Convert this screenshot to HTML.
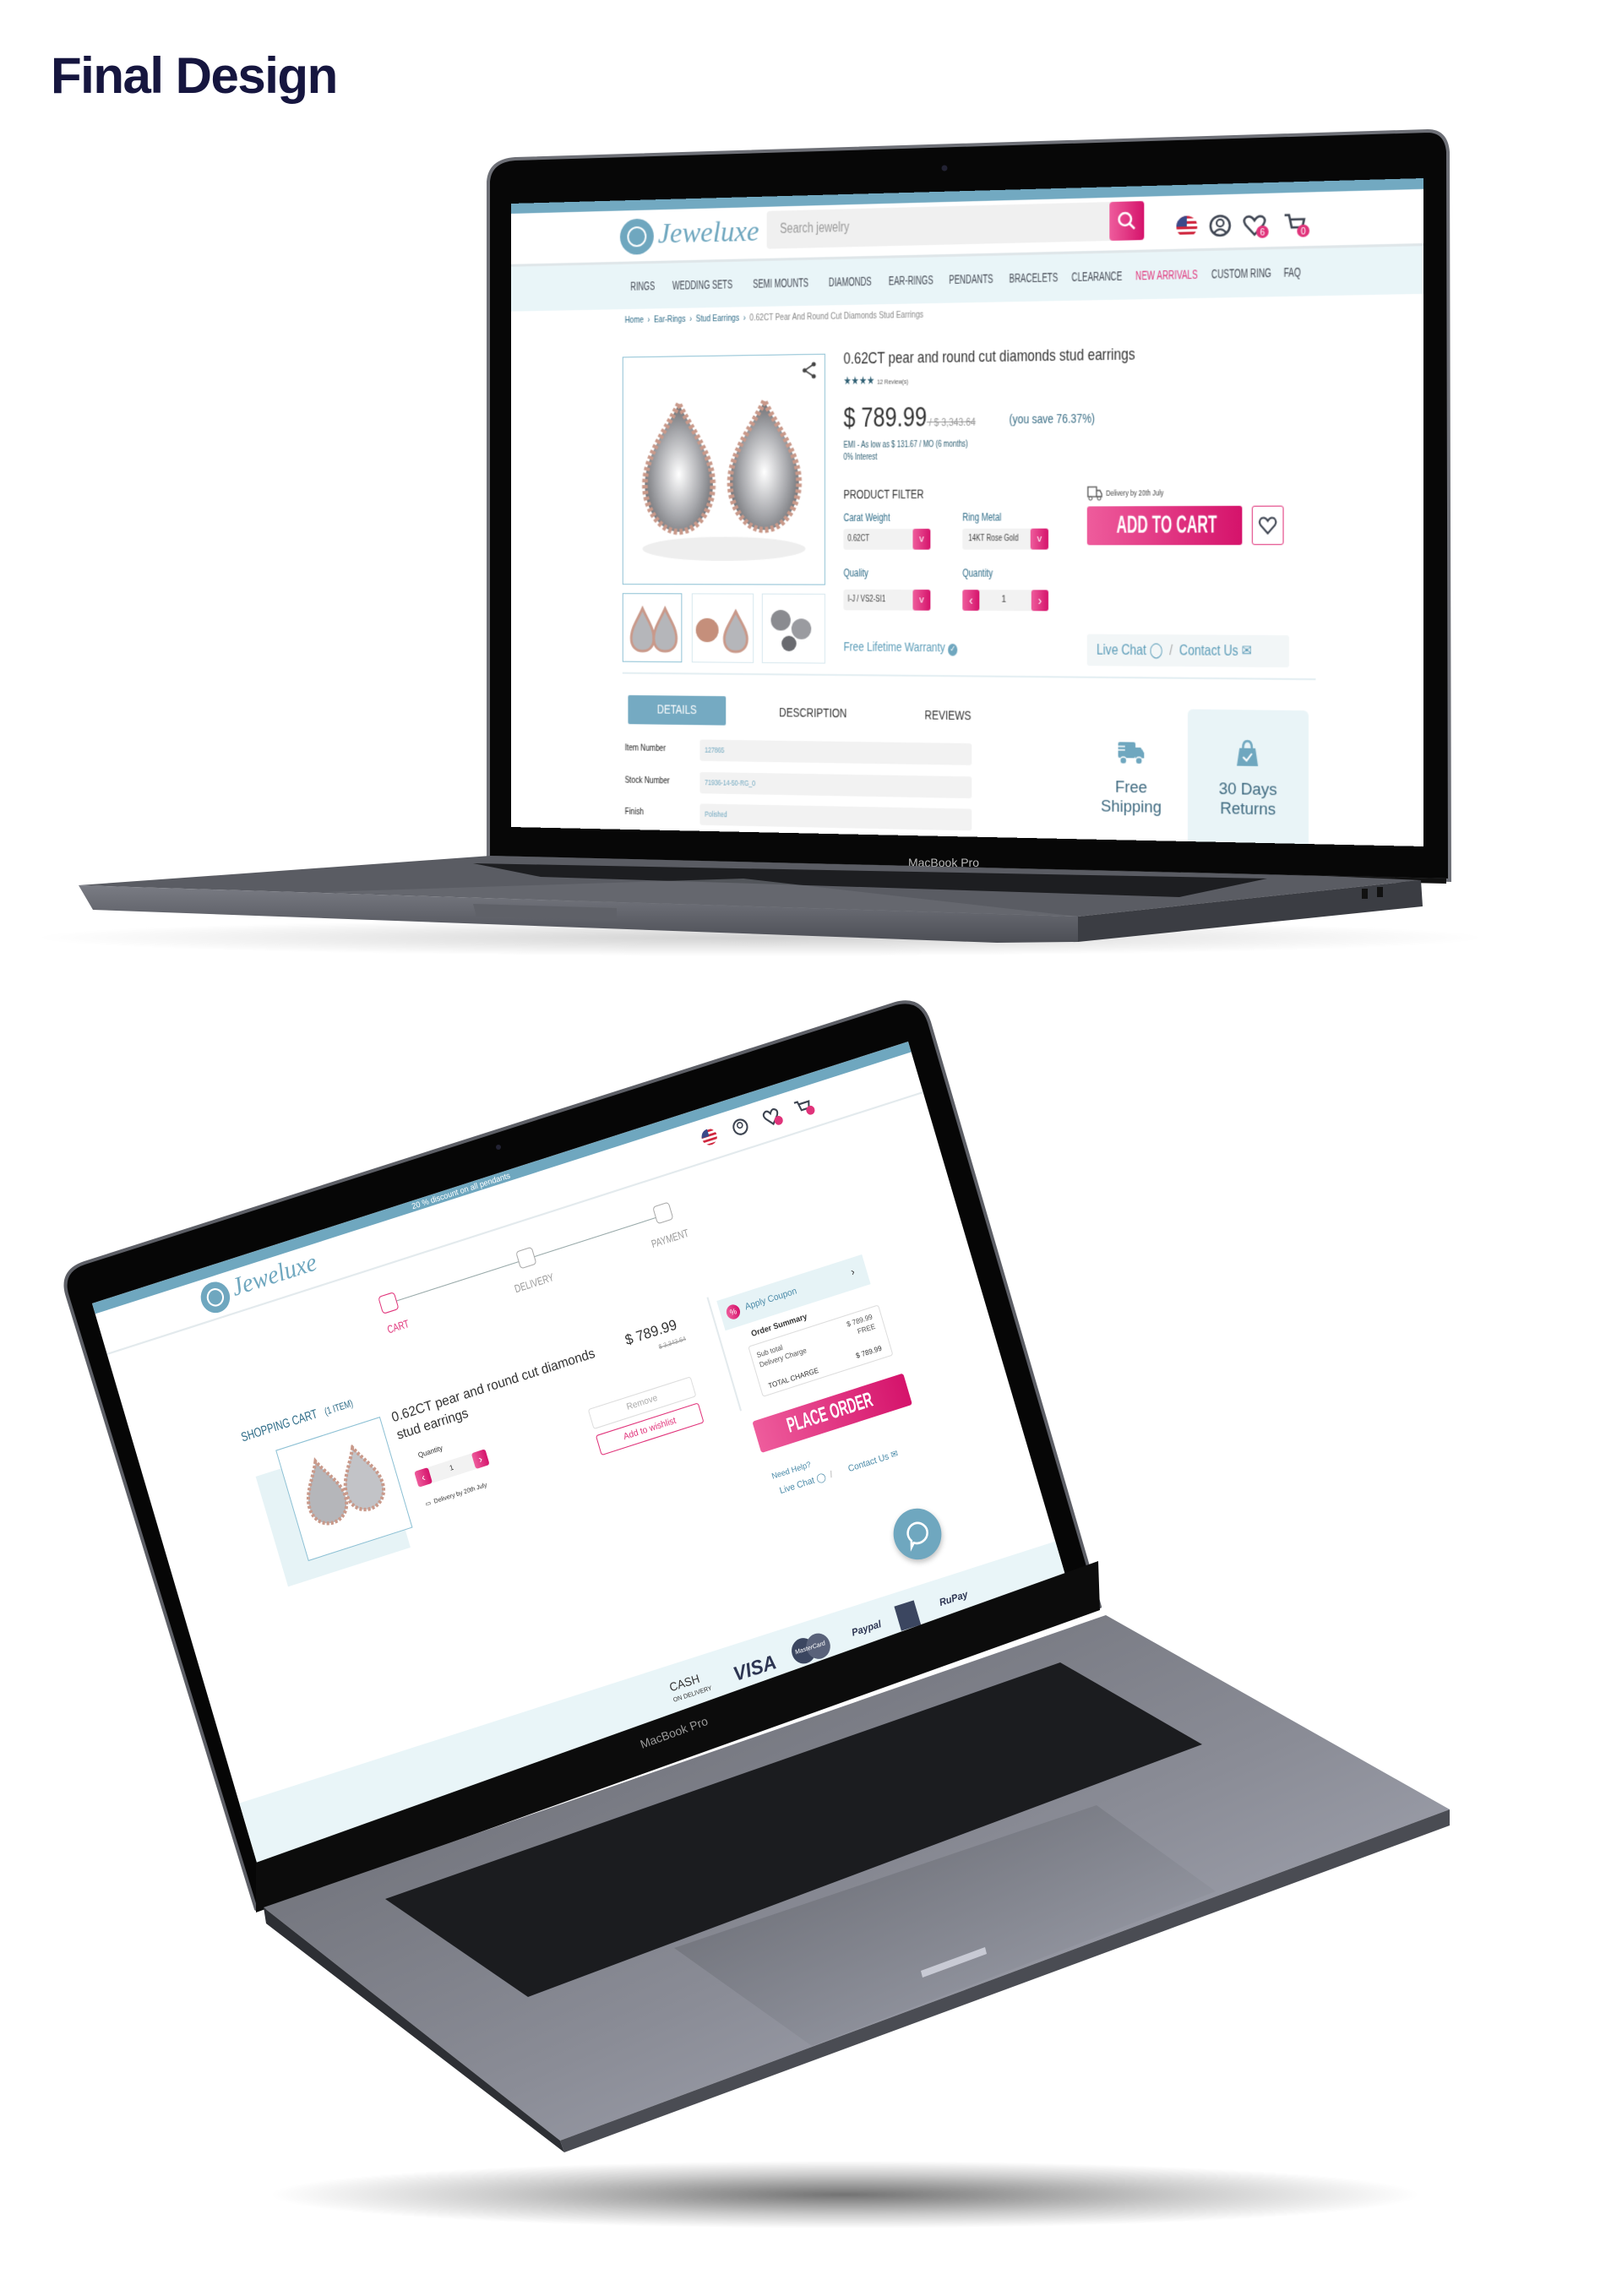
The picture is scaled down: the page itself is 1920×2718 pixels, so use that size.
<!DOCTYPE html>
<html><head><meta charset="utf-8">
<style>
*{margin:0;padding:0;box-sizing:border-box}
html,body{width:1920px;height:2718px;background:#fff;overflow:hidden;position:relative;font-family:"Liberation Sans",sans-serif}
.abs{position:absolute}
.n{position:absolute;white-space:nowrap;transform:scaleX(.8);transform-origin:0 50%}
.nv{position:absolute;white-space:nowrap;transform:scaleX(.64);transform-origin:0 50%}
.scr{position:absolute;left:0;top:0;transform-origin:0 0;background:#fff;overflow:hidden}
.pink{background:linear-gradient(90deg,#ee5c9c,#d5136b)}
</style></head><body>

<div class="abs" style="left:60px;top:60px;font-size:60px;line-height:60px;font-weight:bold;color:#16163f;letter-spacing:-1.5px">Final Design</div>

<!-- ============ LAPTOP 1 ============ -->
<svg class="abs" style="left:0;top:0" width="1920" height="1200">
  <defs>
    <radialGradient id="sh1" cx="50%" cy="50%" r="50%"><stop offset="0" stop-color="#000" stop-opacity=".18"/><stop offset="1" stop-color="#000" stop-opacity="0"/></radialGradient>
    <linearGradient id="fr1" x1="0" y1="0" x2="0" y2="1"><stop offset="0" stop-color="#7a7c84"/><stop offset="1" stop-color="#4c4e55"/></linearGradient>
  </defs>
  <ellipse cx="900" cy="1110" rx="860" ry="22" fill="url(#sh1)"/>
  <path d="M578,215 Q580,190 610,188 L1690,155 Q1712,155 1714,180 L1716,1042 L578,1015 Z" fill="#070707" stroke="#6e7077" stroke-width="4"/>
  <circle cx="1118" cy="199" r="3.5" fill="#223"/>
</svg>

<div class="scr" style="width:1080px;height:740px;transform:matrix3d(0.8955,-0.04087,0,-0.00006204,0,0.9973,0,0,0,0,1,0,605,241,0,1)">
  <div class="abs" style="left:0;top:0;width:1080px;height:12px;background:#72a9c1"></div>
  <div class="abs" style="left:137px;top:22px;width:42px;height:42px;border-radius:50%;background:#6fa7bf"></div>
  <div class="abs" style="left:146px;top:31px;width:24px;height:24px;border-radius:50%;border:2px solid #fff"></div>
  <div class="abs" style="left:184px;top:22px;font:italic 34px 'Liberation Serif',serif;color:#6fa7bf">Jeweluxe</div>
  <div class="abs" style="left:318px;top:17px;width:420px;height:44px;background:#f0f0f0;border-radius:4px"></div>
  <div class="n" style="left:334px;top:30px;font-size:16px;color:#9a9a9a">Search jewelry</div>
  <div class="abs pink" style="left:725px;top:17px;width:40px;height:44px;border-radius:4px"></div>
  <svg class="abs" style="left:733px;top:27px" width="24" height="24"><circle cx="10" cy="10" r="7" fill="none" stroke="#fff" stroke-width="2.5"/><path d="M15,15 L21,21" stroke="#fff" stroke-width="2.5"/></svg>
  <svg class="abs" style="left:800px;top:33px" width="160" height="32">
    <defs><clipPath id="fc"><circle cx="14" cy="14" r="12"/></clipPath></defs>
    <g clip-path="url(#fc)"><rect x="0" y="0" width="28" height="28" fill="#fff"/>
      <rect y="2" width="28" height="3" fill="#d0283f"/><rect y="8" width="28" height="3" fill="#d0283f"/><rect y="14" width="28" height="3" fill="#d0283f"/><rect y="20" width="28" height="3" fill="#d0283f"/><rect y="26" width="28" height="3" fill="#d0283f"/>
      <rect x="0" y="0" width="14" height="14" fill="#3a4a8a"/></g>
    <circle cx="52" cy="14" r="11" fill="none" stroke="#3d4451" stroke-width="2.5"/><circle cx="52" cy="11" r="4" fill="none" stroke="#3d4451" stroke-width="2"/><path d="M45,22 Q52,14 59,22" fill="none" stroke="#3d4451" stroke-width="2"/>
    <path d="M91,25 L81,14 Q77,8 82,5 Q87,3 91,9 Q95,3 100,5 Q105,8 101,14 Z" fill="none" stroke="#3d4451" stroke-width="2.5"/><circle cx="100" cy="22" r="7" fill="#e0337a"/><text x="100" y="26" font-size="10" fill="#fff" text-anchor="middle">6</text>
    <path d="M125,4 L130,4 L133,18 L145,18 L147,9 L132,9" fill="none" stroke="#3d4451" stroke-width="2.5"/><circle cx="146" cy="22" r="7" fill="#e0337a"/><text x="146" y="26" font-size="10" fill="#fff" text-anchor="middle">0</text>
  </svg>
  <div class="abs" style="left:0;top:72px;width:1080px;height:3px;background:#dfe6e9"></div>
  <div class="abs" style="left:0;top:75px;width:1080px;height:53px;background:#e9f5f8"></div>
  <div style="font-size:15px;color:#454a55">
  <span class="nv" style="left:150px;top:93px">RINGS</span>
  <span class="nv" style="left:202px;top:93px">WEDDING SETS</span>
  <span class="nv" style="left:301px;top:93px">SEMI MOUNTS</span>
  <span class="nv" style="left:393px;top:93px">DIAMONDS</span>
  <span class="nv" style="left:465px;top:93px">EAR-RINGS</span>
  <span class="nv" style="left:537px;top:93px">PENDANTS</span>
  <span class="nv" style="left:608px;top:93px">BRACELETS</span>
  <span class="nv" style="left:681px;top:93px">CLEARANCE</span>
  <span class="nv" style="left:755px;top:93px;color:#e0337a">NEW ARRIVALS</span>
  <span class="nv" style="left:842px;top:93px">CUSTOM RING</span>
  <span class="nv" style="left:924px;top:93px">FAQ</span>
  </div>
  <div class="n" style="left:143px;top:135px;font-size:11px;color:#2e6c88">Home &nbsp;›&nbsp; Ear-Rings &nbsp;›&nbsp; Stud Earrings &nbsp;›&nbsp; <span style="color:#888">0.62CT Pear And Round Cut Diamonds Stud Earrings</span></div>
  <div class="abs" style="left:140px;top:184px;width:249px;height:268px;border:1.5px solid #8cc0d4"></div>
  <svg class="abs" style="left:360px;top:192px" width="20" height="22"><circle cx="15" cy="4" r="2.5" fill="#444"/><circle cx="4" cy="11" r="2.5" fill="#444"/><circle cx="15" cy="18" r="2.5" fill="#444"/><path d="M15,4 L4,11 L15,18" fill="none" stroke="#444" stroke-width="1.5"/></svg>
  <svg class="abs" style="left:150px;top:230px" width="230" height="200">
    <defs><radialGradient id="dia" cx="50%" cy="55%" r="55%"><stop offset="0" stop-color="#fff"/><stop offset=".6" stop-color="#a8a9ad"/><stop offset="1" stop-color="#6b6c70"/></radialGradient></defs>
    <ellipse cx="115" cy="180" rx="100" ry="14" fill="#eee"/>
    <path d="M60,10 C45,40 18,70 18,105 C18,135 38,160 60,160 C82,160 102,135 102,105 C102,70 75,40 60,10Z" fill="url(#dia)" stroke="#c9998a" stroke-width="7" stroke-dasharray="4 3"/>
    <path d="M165,8 C150,38 123,68 123,103 C123,133 143,158 165,158 C187,158 207,133 207,103 C207,68 180,38 165,8Z" fill="url(#dia)" stroke="#c9998a" stroke-width="7" stroke-dasharray="4 3"/>
  </svg>
  <div class="abs" style="left:140px;top:462px;width:74px;height:81px;border:1.5px solid #8cc0d4"></div>
  <div class="abs" style="left:226px;top:462px;width:76px;height:81px;border:1px solid #d6e7ee"></div>
  <div class="abs" style="left:312px;top:462px;width:77px;height:81px;border:1px solid #d6e7ee"></div>
  <svg class="abs" style="left:145px;top:475px" width="240" height="60">
    <path d="M20,5 C14,18 6,28 6,40 C6,50 12,55 20,55 C28,55 34,50 34,40 C34,28 26,18 20,5Z" fill="#b5b6ba" stroke="#c9998a" stroke-width="3"/>
    <path d="M48,5 C42,18 34,28 34,40 C34,50 40,55 48,55 C56,55 62,50 62,40 C62,28 54,18 48,5Z" fill="#b5b6ba" stroke="#c9998a" stroke-width="3"/>
    <circle cx="100" cy="30" r="14" fill="#c58f7b"/><path d="M135,8 C129,20 121,30 121,40 C121,50 127,55 135,55 C143,55 149,50 149,40 C149,30 141,20 135,8Z" fill="#b5b6ba" stroke="#c9998a" stroke-width="3"/>
    <circle cx="190" cy="18" r="12" fill="#8a8b90"/><circle cx="215" cy="28" r="12" fill="#9a9ba0"/><circle cx="200" cy="45" r="9" fill="#6a6b70"/>
  </svg>
  <div class="n" style="left:411px;top:180px;font-size:19px;color:#333">0.62CT pear and round cut diamonds stud earrings</div>
  <div class="n" style="left:411px;top:208px;font-size:13px;color:#2e5f73">★★★★ <span style="font-size:8px;color:#555">12 Review(s)</span></div>
  <div class="n" style="left:411px;top:240px;font-size:32px;color:#333">$ 789.99<span style="font-size:13px;color:#999;text-decoration:line-through"> / $ 3,343.64</span></div>
  <div class="n" style="left:608px;top:254px;font-size:15px;color:#3a6e86">(you save 76.37%)</div>
  <div class="n" style="left:411px;top:285px;font-size:10px;color:#2e5f73">EMI - As low as $ 131.67 / MO (6 months)</div>
  <div class="n" style="left:411px;top:299px;font-size:10px;color:#2e5f73">0% Interest</div>
  <div class="n" style="left:411px;top:339px;font-size:14px;color:#333">PRODUCT FILTER</div>
  <div class="n" style="left:411px;top:367px;font-size:12px;color:#2e6c88">Carat Weight</div>
  <div class="n" style="left:553px;top:367px;font-size:12px;color:#2e6c88">Ring Metal</div>
  <div class="abs" style="left:411px;top:387px;width:104px;height:24px;background:#f2f2f2;border-radius:3px"></div>
  <div class="abs pink" style="left:494px;top:387px;width:21px;height:24px;border-radius:3px;color:#fff;font-size:11px;text-align:center;line-height:24px">v</div>
  <div class="n" style="left:416px;top:393px;font-size:10px;color:#444">0.62CT</div>
  <div class="abs" style="left:553px;top:387px;width:101px;height:24px;background:#f2f2f2;border-radius:3px"></div>
  <div class="abs pink" style="left:633px;top:387px;width:21px;height:24px;border-radius:3px;color:#fff;font-size:11px;text-align:center;line-height:24px">v</div>
  <div class="n" style="left:560px;top:393px;font-size:10px;color:#444">14KT Rose Gold</div>
  <div class="n" style="left:411px;top:431px;font-size:12px;color:#2e6c88">Quality</div>
  <div class="n" style="left:553px;top:431px;font-size:12px;color:#2e6c88">Quantity</div>
  <div class="abs" style="left:411px;top:457px;width:104px;height:24px;background:#f2f2f2;border-radius:3px"></div>
  <div class="abs pink" style="left:494px;top:457px;width:21px;height:24px;border-radius:3px;color:#fff;font-size:11px;text-align:center;line-height:24px">v</div>
  <div class="n" style="left:416px;top:463px;font-size:10px;color:#444">I-J / VS2-SI1</div>
  <div class="abs" style="left:553px;top:457px;width:101px;height:24px;background:#f2f2f2;border-radius:3px"></div>
  <div class="abs pink" style="left:553px;top:457px;width:20px;height:24px;border-radius:3px;color:#fff;font-size:14px;text-align:center;line-height:24px">‹</div>
  <div class="abs pink" style="left:634px;top:457px;width:20px;height:24px;border-radius:3px;color:#fff;font-size:14px;text-align:center;line-height:24px">›</div>
  <div class="abs" style="left:599px;top:463px;font-size:10px;color:#444">1</div>
  <svg class="abs" style="left:699px;top:338px" width="18" height="18"><rect x="1" y="2" width="10" height="11" fill="none" stroke="#555" stroke-width="1.3"/><path d="M11,6 L15,6 L17,10 L17,13 L11,13" fill="none" stroke="#555" stroke-width="1.3"/><circle cx="4" cy="15" r="2" fill="#fff" stroke="#555"/><circle cx="14" cy="15" r="2" fill="#fff" stroke="#555"/></svg>
  <div class="n" style="left:721px;top:342px;font-size:9px;color:#444">Delivery by 20th July</div>
  <div class="abs pink" style="left:699px;top:362px;width:178px;height:44px;border-radius:3px"></div>
  <div class="n" style="left:733px;top:367px;font-size:28px;font-weight:bold;color:#fff;transform:scaleX(.6)">ADD TO CART</div>
  <div class="abs" style="left:888px;top:362px;width:36px;height:44px;border:1.5px solid #e0337a;border-radius:3px"></div>
  <svg class="abs" style="left:895px;top:373px" width="22" height="22"><path d="M11,20 L3,11 Q0,6 4,3 Q8,1 11,6 Q14,1 18,3 Q22,6 19,11 Z" fill="none" stroke="#3d4451" stroke-width="2"/></svg>
  <div class="n" style="left:411px;top:515px;font-size:15px;color:#5b9cb8">Free Lifetime Warranty <span style="display:inline-block;width:14px;height:14px;border-radius:50%;background:#6fa7bf;color:#fff;font-size:10px;text-align:center;line-height:14px">✓</span></div>
  <div class="abs" style="left:699px;top:507px;width:231px;height:36px;background:#f2f6f7;border-radius:3px"></div>
  <div class="n" style="left:710px;top:515px;font-size:17px;color:#5b9cb8">Live Chat ◯ &nbsp;<span style="color:#aaa">/</span>&nbsp; Contact Us ✉</div>
  <div class="abs" style="left:140px;top:555px;width:820px;height:2px;background:#e3eef2"></div>
  <div class="abs" style="left:147px;top:582px;width:121px;height:34px;background:#75aac2;border-radius:2px"></div>
  <div class="n" style="left:183px;top:590px;font-size:15px;color:#fff">DETAILS</div>
  <div class="n" style="left:333px;top:592px;font-size:15px;color:#333">DESCRIPTION</div>
  <div class="n" style="left:508px;top:593px;font-size:15px;color:#333">REVIEWS</div>
  <div class="n" style="left:143px;top:638px;font-size:11px;color:#222">Item Number</div>
  <div class="n" style="left:143px;top:676px;font-size:11px;color:#222">Stock Number</div>
  <div class="n" style="left:143px;top:713px;font-size:11px;color:#222">Finish</div>
  <div class="abs" style="left:236px;top:633px;width:328px;height:25px;background:#f2f2f2;border-radius:3px"></div>
  <div class="abs" style="left:236px;top:671px;width:328px;height:25px;background:#f2f2f2;border-radius:3px"></div>
  <div class="abs" style="left:236px;top:708px;width:328px;height:25px;background:#f2f2f2;border-radius:3px"></div>
  <div class="n" style="left:242px;top:640px;font-size:9px;color:#6fa7bf">127865</div>
  <div class="n" style="left:242px;top:678px;font-size:9px;color:#6fa7bf">71936-14-50-RG_0</div>
  <div class="n" style="left:242px;top:715px;font-size:9px;color:#6fa7bf">Polished</div>
  <svg class="abs" style="left:733px;top:627px" width="34" height="30"><rect x="2" y="2" width="20" height="18" rx="2" fill="#6fa7bf"/><path d="M22,8 L28,8 L32,14 L32,20 L22,20Z" fill="#6fa7bf"/><circle cx="8" cy="23" r="4" fill="#6fa7bf" stroke="#fff" stroke-width="1.5"/><circle cx="26" cy="23" r="4" fill="#6fa7bf" stroke="#fff" stroke-width="1.5"/><path d="M0,7 L10,7 M0,11 L10,11" stroke="#fff" stroke-width="1.5"/></svg>
  <div class="abs" style="left:700px;top:669px;width:100px;text-align:center;font-size:18px;line-height:22px;color:#3f6a80">Free<br>Shipping</div>
  <div class="abs" style="left:815px;top:591px;width:137px;height:160px;background:#e9f4f7;border-radius:6px"></div>
  <svg class="abs" style="left:870px;top:624px" width="26" height="32"><path d="M8,10 Q8,2 13,2 Q18,2 18,10" fill="none" stroke="#6fa7bf" stroke-width="2.5"/><path d="M4,10 L22,10 L25,30 L1,30Z" fill="#6fa7bf"/><path d="M8,20 L12,24 L18,16" fill="none" stroke="#fff" stroke-width="2"/></svg>
  <div class="abs" style="left:815px;top:669px;width:137px;text-align:center;font-size:18px;line-height:22px;color:#3f6a80">30 Days<br>Returns</div>
</div>

<svg class="abs" style="left:0;top:0" width="1920" height="1200">
  <path d="M581,1013 L1712,1040 L1712,1046 L581,1020Z" fill="#111"/>
  <text x="1117" y="1026" font-size="14" fill="#bbb" text-anchor="middle" font-family="Liberation Sans">MacBook Pro</text>
  <path d="M93,1048 L581,1013 L1570,1037 L1682,1042 L1276,1085 Z" fill="#5a5c63"/>
  <path d="M560,1022 L1500,1040 L1396,1062 L640,1038 Z" fill="#1d1e21"/>
  <path d="M380,1056 L880,1040 L1276,1085 L1000,1078 Z" fill="#6a6c73" opacity=".7"/>
  <path d="M93,1048 L1276,1085 L1276,1115 L1180,1116 L110,1077 Z" fill="url(#fr1)"/>
  <path d="M1276,1085 L1682,1042 L1684,1073 L1276,1115 Z" fill="#3b3d43"/>
  <path d="M560,1070 L730,1075 L730,1090 L564,1085Z" fill="#5f6168"/>
  <rect x="1612" y="1052" width="7" height="12" fill="#111"/><rect x="1630" y="1050" width="7" height="12" fill="#111"/>
</svg>

<!-- ============ LAPTOP 2 ============ -->
<svg class="abs" style="left:0;top:1150px" width="1920" height="1568">
  <defs>
    <radialGradient id="sh2" cx="50%" cy="50%" r="50%"><stop offset="0" stop-color="#000" stop-opacity=".55"/><stop offset=".6" stop-color="#000" stop-opacity=".2"/><stop offset="1" stop-color="#000" stop-opacity="0"/></radialGradient>
  </defs>
  <ellipse cx="1000" cy="1448" rx="680" ry="40" fill="url(#sh2)"/>
  <path d="M80,385 Q70,355 100,345 L1060,38 Q1090,30 1100,60 L1302,752 L303,1110 Z" fill="#060606" stroke="#5d5f66" stroke-width="4" stroke-linejoin="round"/>
  <circle cx="590" cy="208" r="3" fill="#223"/>
</svg>

<div class="scr" style="width:1000px;height:640px;transform:matrix(0.966,-0.31,0.3047,1.0344,109,1543)">
  <div class="abs" style="left:0;top:0;width:1000px;height:12px;background:#6fa7bf"></div>
  <div class="abs" style="left:390px;top:0;font-size:9px;color:#fff;line-height:12px">20 % discount on all pendants</div>
  <div class="abs" style="left:123px;top:18px;width:34px;height:34px;border-radius:50%;background:#6fa7bf"></div>
  <div class="abs" style="left:130px;top:25px;width:20px;height:20px;border-radius:50%;border:2px solid #fff"></div>
  <div class="abs" style="left:162px;top:16px;font:italic 28px 'Liberation Serif',serif;color:#6fa7bf">Jeweluxe</div>
  <svg class="abs" style="left:736px;top:22px" width="140" height="26">
    <defs><clipPath id="fc2"><circle cx="10" cy="11" r="9"/></clipPath></defs>
    <g clip-path="url(#fc2)"><rect width="22" height="22" fill="#fff"/><rect y="3" width="22" height="2.5" fill="#d0283f"/><rect y="8" width="22" height="2.5" fill="#d0283f"/><rect y="13" width="22" height="2.5" fill="#d0283f"/><rect y="18" width="22" height="2.5" fill="#d0283f"/><rect width="10" height="10" fill="#3a4a8a"/></g>
    <circle cx="48" cy="11" r="8" fill="none" stroke="#3d4451" stroke-width="2"/><circle cx="48" cy="9" r="3" fill="none" stroke="#3d4451" stroke-width="1.5"/>
    <path d="M86,19 L79,11 Q76,6 80,4 Q83,2 86,7 Q89,2 92,4 Q96,6 93,11Z" fill="none" stroke="#3d4451" stroke-width="2"/><circle cx="93" cy="17" r="5" fill="#e0337a"/>
    <path d="M116,4 L120,4 L122,14 L131,14 L133,7 L121,7" fill="none" stroke="#3d4451" stroke-width="2"/><circle cx="132" cy="17" r="5" fill="#e0337a"/>
  </svg>
  <div class="abs" style="left:0;top:57px;width:1000px;height:2px;background:#e3eaed"></div>
  <div class="abs" style="left:332px;top:99px;width:337px;height:1px;background:#9aa"></div>
  <div class="abs" style="left:322px;top:89px;width:20px;height:20px;border:1.5px solid #e0337a;border-radius:4px;background:#fff"></div>
  <div class="abs" style="left:491px;top:88px;width:20px;height:20px;border:1.5px solid #aaa;border-radius:4px;background:#fff"></div>
  <div class="abs" style="left:659px;top:87px;width:20px;height:20px;border:1.5px solid #aaa;border-radius:4px;background:#fff"></div>
  <div class="n" style="left:322px;top:120px;font-size:12px;color:#e0337a">CART</div>
  <div class="n" style="left:478px;top:120px;font-size:12px;color:#999">DELIVERY</div>
  <div class="n" style="left:646px;top:119px;font-size:12px;color:#999">PAYMENT</div>
  <div class="n" style="left:123px;top:182px;font-size:14px;color:#2e6c88">SHOPPING CART &nbsp;&nbsp;<span style="font-size:11px">(1 ITEM)</span></div>
  <div class="abs" style="left:126px;top:236px;width:150px;height:126px;background:#e6f3f6"></div>
  <div class="abs" style="left:157px;top:215px;width:128px;height:127px;background:#fff;border:1.5px solid #8cc0d4"></div>
  <svg class="abs" style="left:168px;top:235px" width="110" height="95">
    <path d="M30,5 C22,22 8,35 8,52 C8,66 18,75 30,75 C42,75 52,66 52,52 C52,35 38,22 30,5Z" fill="#b5b6ba" stroke="#c9998a" stroke-width="4" stroke-dasharray="3 2"/>
    <path d="M76,3 C68,20 54,33 54,50 C54,64 64,73 76,73 C88,73 98,64 98,50 C98,33 84,20 76,3Z" fill="#c2c3c7" stroke="#c9998a" stroke-width="4" stroke-dasharray="3 2"/>
  </svg>
  <div class="abs" style="left:298px;top:212px;font-size:15px;color:#333;white-space:nowrap">0.62CT pear and round cut diamonds</div>
  <div class="abs" style="left:298px;top:232px;font-size:15px;color:#333">stud earrings</div>
  <div class="abs" style="left:315px;top:264px;font-size:8px;color:#333">Quantity</div>
  <div class="abs" style="left:305px;top:284px;width:87px;height:18px;background:#f2f2f2"></div>
  <div class="abs pink" style="left:305px;top:284px;width:17px;height:18px;border-radius:3px;color:#fff;font-size:12px;text-align:center;line-height:18px">‹</div>
  <div class="abs pink" style="left:375px;top:284px;width:17px;height:18px;border-radius:3px;color:#fff;font-size:12px;text-align:center;line-height:18px">›</div>
  <div class="abs" style="left:346px;top:288px;font-size:8px;color:#333">1</div>
  <div class="abs" style="left:307px;top:318px;font-size:7px;color:#333">▭ &nbsp;Delivery by 20th July</div>
  <div class="abs" style="left:585px;top:210px;font-size:16px;color:#333">$ 789.99</div>
  <div class="abs" style="left:620px;top:233px;font-size:7px;color:#999;text-decoration:line-through">$ 3,343.64</div>
  <div class="abs" style="left:520px;top:277px;width:126px;height:23px;border:1px solid #ddd;border-radius:3px;text-align:center;font-size:10px;color:#aaa;line-height:21px">Remove</div>
  <div class="abs" style="left:520px;top:307px;width:126px;height:23px;border:1px solid #e0337a;border-radius:3px;text-align:center;font-size:10px;color:#e0337a;line-height:21px">Add to wishlist</div>
  <div class="abs" style="left:690px;top:200px;width:2px;height:130px;background:#e3eaed"></div>
  <div class="abs" style="left:700px;top:207px;width:178px;height:34px;background:#e6f3f6"></div>
  <div class="abs pink" style="left:707px;top:216px;width:16px;height:16px;border-radius:50%;color:#fff;font-size:9px;text-align:center;line-height:16px">%</div>
  <div class="abs" style="left:730px;top:218px;font-size:10px;color:#4a8aa8">Apply Coupon</div>
  <div class="abs" style="left:860px;top:215px;font-size:12px;color:#333">›</div>
  <div class="abs" style="left:728px;top:248px;font-size:9px;font-weight:bold;color:#333">Order Summary</div>
  <div class="abs" style="left:720px;top:265px;width:160px;height:58px;border:1px solid #ddd;border-radius:3px"></div>
  <div class="abs" style="left:727px;top:272px;font-size:8px;color:#555;line-height:11px">Sub total<br>Delivery Charge</div>
  <div class="abs" style="left:838px;top:270px;font-size:8px;color:#555;line-height:11px;text-align:right">$ 789.99<br>FREE</div>
  <div class="abs" style="left:730px;top:309px;font-size:8px;color:#333">TOTAL CHARGE</div>
  <div class="abs" style="left:838px;top:307px;font-size:8px;color:#333">$ 789.99</div>
  <div class="abs pink" style="left:700px;top:345px;width:185px;height:36px;border-radius:3px"></div>
  <div class="n" style="left:738px;top:348px;font-size:23px;font-weight:bold;color:#fff;transform:scaleX(.62)">PLACE ORDER</div>
  <div class="abs" style="left:704px;top:404px;font-size:9px;color:#4a8aa8">Need Help?</div>
  <div class="abs" style="left:708px;top:422px;font-size:10px;color:#4a8aa8">Live Chat ◯ &nbsp;<span style="color:#aaa">/</span>&nbsp;&nbsp;&nbsp;&nbsp;&nbsp;&nbsp; Contact Us ✉</div>
  <div class="abs" style="left:820px;top:490px;width:56px;height:56px;border-radius:50%;background:#6fa7bf;box-shadow:0 3px 6px rgba(0,0,0,.25)"></div>
  <svg class="abs" style="left:832px;top:502px" width="32" height="32"><path d="M16,4 A12,11 0 1 1 9,24 L5,28 L7,21 A12,11 0 0 1 16,4Z" fill="none" stroke="#fff" stroke-width="2.5"/></svg>
  <div class="abs" style="left:0;top:572px;width:1000px;height:70px;background:#e9f5f8"></div>
  <div class="abs" style="left:520px;top:590px;font-size:13px;color:#333;line-height:12px">CASH<br><span style="font-size:7px">ON DELIVERY</span></div>
  <div class="abs" style="left:596px;top:591px;font:italic bold 22px 'Liberation Sans',sans-serif;color:#2d3552">VISA</div>
  <div class="abs" style="left:668px;top:588px;width:28px;height:28px;border-radius:50%;background:#3b4660"></div>
  <div class="abs" style="left:686px;top:588px;width:28px;height:28px;border-radius:50%;background:#59627a"></div>
  <div class="abs" style="left:672px;top:598px;font-size:7px;color:#fff;font-style:italic">MasterCard</div>
  <div class="abs" style="left:742px;top:594px;font:italic bold 11px 'Liberation Sans',sans-serif;color:#2d3552">Paypal</div>
  <div class="abs" style="left:798px;top:586px;width:24px;height:28px;background:#3b4660"></div>
  <div class="abs" style="left:850px;top:592px;font:italic bold 11px 'Liberation Sans',sans-serif;color:#2d3552">RuPay</div>
</div>

<svg class="abs" style="left:0;top:1150px" width="1920" height="1568">
  <defs>
    <linearGradient id="dk2" x1="0" y1="0" x2="1" y2="1"><stop offset="0" stop-color="#606269"/><stop offset=".55" stop-color="#8a8c96"/><stop offset="1" stop-color="#b3b6c3"/></linearGradient>
    <linearGradient id="tp2" x1="0" y1="0" x2="1" y2="1"><stop offset="0" stop-color="#5e6067"/><stop offset="1" stop-color="#a6a9b5"/></linearGradient>
  </defs>
  <path d="M303,1055 L1300,698 L1302,756 L303,1114Z" fill="#0c0c0c"/>
  <text x="0" y="0" font-size="14" fill="#999" font-family="Liberation Sans" transform="translate(760,920) rotate(-20)">MacBook Pro</text>
  <path d="M312,1108 L1309,762 L1716,992 L663,1384 Z" fill="url(#dk2)"/>
  <path d="M312,1108 L663,1384 L668,1398 L315,1127 Z" fill="#2d2f34"/>
  <path d="M663,1384 L1716,992 L1716,1011 L668,1398 Z" fill="#4a4c53"/>
  <path d="M456,1098 L1255,818 L1423,915 L625,1214 Z" fill="#1b1c1f"/>
  <path d="M798,1156 L1298,987 L1439,1089 L961,1272 Z" fill="url(#tp2)" opacity=".9"/>
  <path d="M1090,1183 L1166,1155 L1168,1163 L1092,1191Z" fill="#c8cad4"/>
</svg>

</body></html>
